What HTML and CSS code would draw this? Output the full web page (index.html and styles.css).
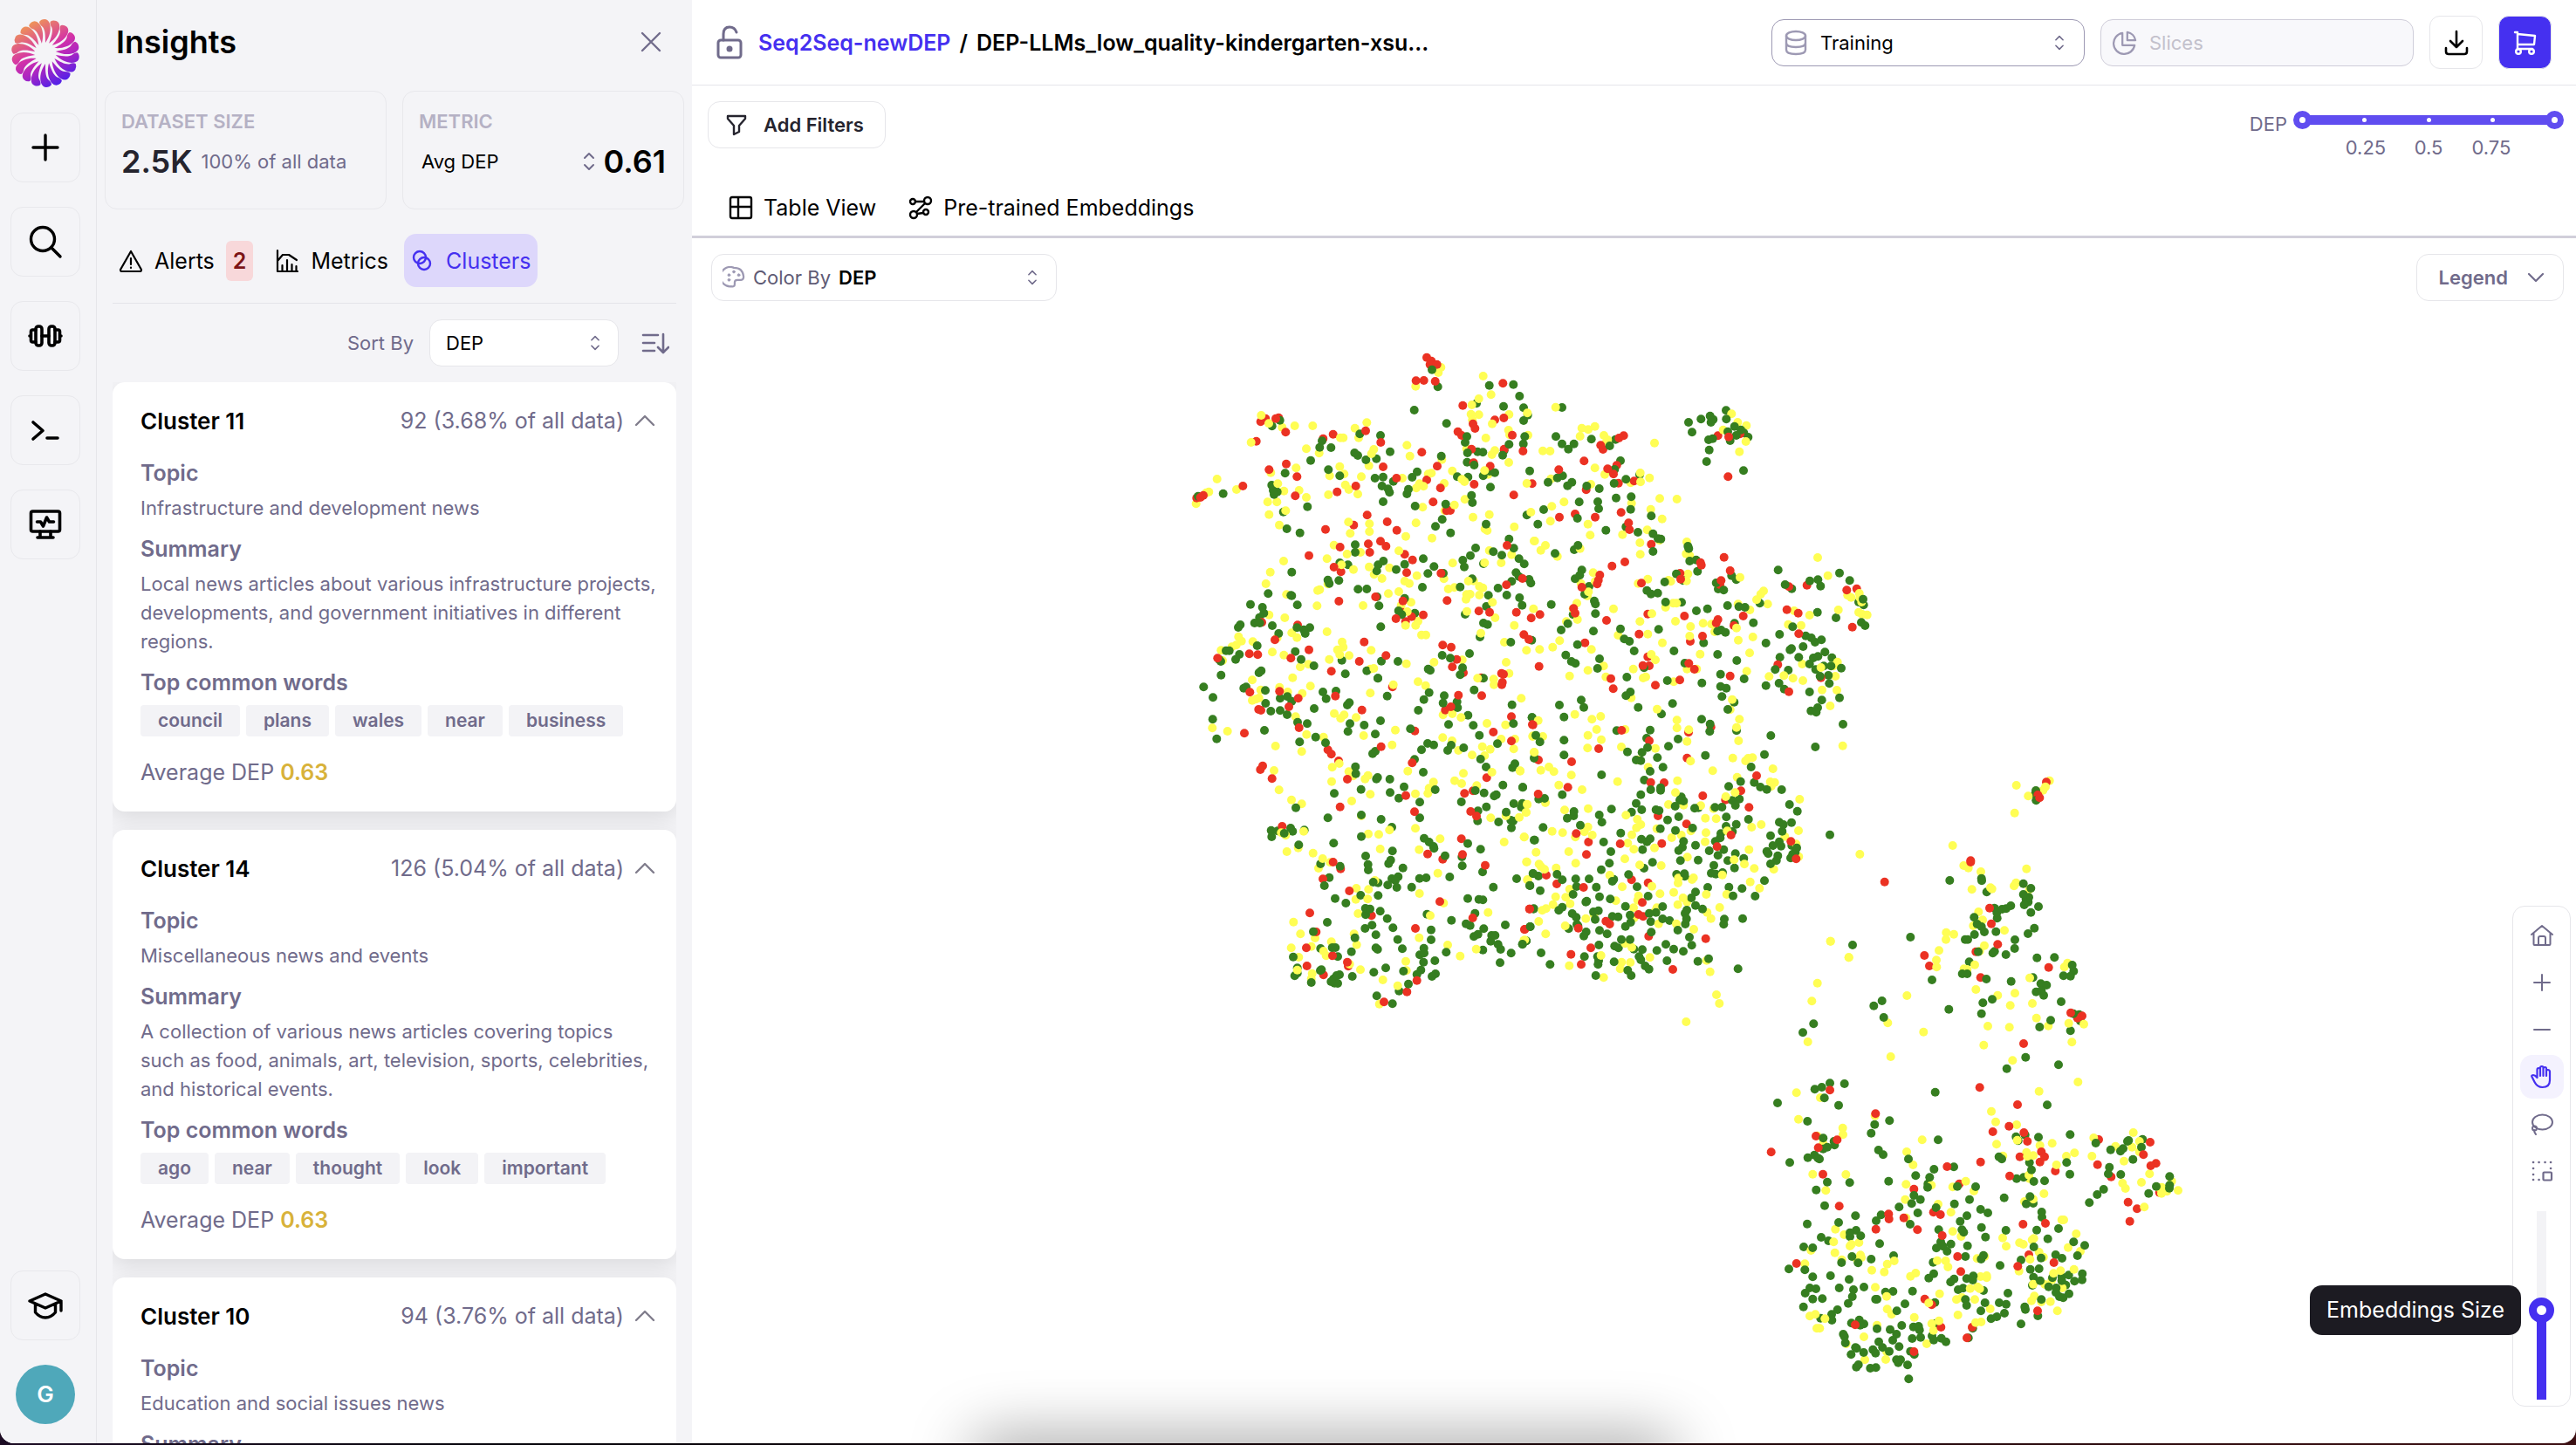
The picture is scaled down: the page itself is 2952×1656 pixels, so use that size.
FILE: index.html
```html
<!DOCTYPE html>
<html lang="en">
<head>
<meta charset="utf-8">
<title>Insights</title>
<link rel="stylesheet" href="styles.css">
</head>
<body>
<div class="app">
  <nav class="rail" aria-label="Main">
    <a class="logo" href="#" aria-label="Home">
      <svg viewBox="-40 -40 80 80" width="80" height="80">
        <defs>
          <linearGradient id="brand" x1="0.25" y1="0.02" x2="0.75" y2="0.98">
            <stop offset="0" stop-color="#f2a04e"/><stop offset="0.45" stop-color="#d433a6"/><stop offset="0.65" stop-color="#b026c0"/><stop offset="1" stop-color="#3f1ff0"/>
          </linearGradient>
          <path id="petal" d="M0-12C0-20 0-26-3-30Q-7-33-7-36-5-39-1-39 3-39 5-34C7-27 5-19 0-12Z" fill="#fff"/>
          <mask id="petals" maskUnits="userSpaceOnUse" x="-40" y="-40" width="80" height="80">
            <use href="#petal"/><use href="#petal" transform="rotate(20)"/><use href="#petal" transform="rotate(40)"/><use href="#petal" transform="rotate(60)"/><use href="#petal" transform="rotate(80)"/><use href="#petal" transform="rotate(100)"/><use href="#petal" transform="rotate(120)"/><use href="#petal" transform="rotate(140)"/><use href="#petal" transform="rotate(160)"/><use href="#petal" transform="rotate(180)"/><use href="#petal" transform="rotate(200)"/><use href="#petal" transform="rotate(220)"/><use href="#petal" transform="rotate(240)"/><use href="#petal" transform="rotate(260)"/><use href="#petal" transform="rotate(280)"/><use href="#petal" transform="rotate(300)"/><use href="#petal" transform="rotate(320)"/><use href="#petal" transform="rotate(340)"/>
          </mask>
        </defs>
        <rect x="-40" y="-40" width="80" height="80" fill="url(#brand)" mask="url(#petals)"/>
      </svg>
    </a>
    <button class="rail-btn" aria-label="New"><svg class="ic" viewBox="0 0 40 40" width="40" height="40"><path d="M20 6v28M6 20h28" stroke-width="3.4"/></svg></button>
    <button class="rail-btn" aria-label="Search"><svg class="ic" viewBox="0 0 40 40" width="40" height="40"><circle cx="17" cy="17" r="13.5" stroke-width="3.4"/><path d="M27 27l10 10" stroke-width="3.4"/></svg></button>
    <button class="rail-btn" aria-label="Train"><svg class="ic" viewBox="0 0 40 40" width="40" height="40"><g stroke-width="3.6"><rect x="9" y="9" width="7" height="22" rx="3"/><rect x="24" y="9" width="7" height="22" rx="3"/><path d="M9 13H5.500q-2 0-2 2v10q0 2 2 2H9M31 13h3.500q2 0 2 2v10q0 2-2 2H31M16 20h8M2 20h1.500M36.500 20H38"/></g></svg></button>
    <button class="rail-btn" aria-label="Console"><svg class="ic" viewBox="0 0 40 40" width="40" height="40"><path d="M6 11l11 9.500L6 30M22 29h12" stroke-width="3.600"/></svg></button>
    <button class="rail-btn" aria-label="Monitor"><svg class="ic" viewBox="0 0 40 40" width="40" height="40"><g stroke-width="3.600"><rect x="3.500" y="5" width="33" height="23" rx="2"/><path d="M10.500 17h4l3 5 4-10 3 5h5M14 28v6M26 28v6M11 35h18"/></g></svg></button>
    <button class="rail-btn rail-push" aria-label="Learn"><svg class="ic" viewBox="0 0 40 40" width="40" height="40"><path d="M2 15l18-8 18 8-18 8zM8.500 18v10q5 6 11.500 6t11.500-6V18M38 15v11" stroke-width="3.400"/></svg></button>
    <button class="avatar" aria-label="Account">G</button>
  </nav>

  <aside class="insights">
    <header class="ins-head">
      <h1>Insights</h1>
      <button class="bare muted" aria-label="Close"><svg class="ic" viewBox="0 0 24 24" width="24" height="24"><path d="M2 2l20 20M22 2L2 22" stroke-width="2.400"/></svg></button>
    </header>
    <div class="stats">
      <section class="stat">
        <h2>DATASET SIZE</h2>
        <p class="stat-row"><strong class="ink">2.5K</strong><span>100% of all data</span></p>
      </section>
      <section class="stat">
        <h2><label for="metric">METRIC</label></h2>
        <div class="stat-row metric">
          <select id="metric"><option>Avg DEP</option></select>
          <svg class="ic muted" viewBox="0 0 14 22" width="14" height="22"><path d="M2 7l5-5 5 5M2 15l5 5 5-5" stroke-width="2"/></svg>
          <strong>0.61</strong>
        </div>
      </section>
    </div>
    <div class="ins-body">
      <div class="tabs">
        <button class="tab"><svg class="ic" viewBox="0 0 28 28" width="28" height="28"><path d="M14 3L2 24q0 2 1.500 2h21q1.500 0 1.500-2zM14 11v7M14 21.500v.5" stroke-width="2.200"/></svg>Alerts<b class="badge">2</b></button>
        <button class="tab"><svg class="ic" viewBox="0 0 28 28" width="28" height="28"><path d="M3 2v24h23M3 14l6-7h7l9 6M8.500 19v7M14 13v13M19.500 18v8M24.500 20v6" stroke-width="2.200"/></svg>Metrics</button>
        <button class="tab active"><svg class="ic" viewBox="0 0 28 28" width="28" height="28"><g stroke-width="2.400"><circle cx="11" cy="10" r="7"/><circle cx="16" cy="17" r="7"/></g></svg>Clusters</button>
      </div>
      <div class="sort">
        <label for="sort">Sort By</label>
        <span class="field sort-field"><select id="sort"><option>DEP</option></select><svg class="ic muted" viewBox="0 0 14 22" width="12" height="18"><path d="M2 7l5-5 5 5M2 15l5 5 5-5" stroke-width="2"/></svg></span>
        <button class="bare muted" aria-label="Sort direction"><svg class="ic" viewBox="0 0 32 26" width="32" height="26"><path d="M2 4h17M2 13h13M2 22h13M25 3v20M19 18l6 6 6-6" stroke-width="2.600"/></svg></button>
      </div>
      <div class="list">
        <article class="card">
          <header><h2>Cluster 11</h2><span>92 (3.68% of all data)</span><svg class="ic" viewBox="0 0 24 14" width="24" height="14"><path d="M2 12L12 2l10 10" stroke-width="2.400"/></svg></header>
          <h3>Topic</h3><p>Infrastructure and development news</p>
          <h3>Summary</h3><p>Local news articles about various infrastructure projects, developments, and government initiatives in different<br>regions.</p>
          <h3>Top common words</h3>
          <ul><li>council</li><li>plans</li><li>wales</li><li>near</li><li>business</li></ul>
          <div class="avg">Average DEP <b>0.63</b></div>
        </article>
        <article class="card">
          <header><h2>Cluster 14</h2><span>126 (5.04% of all data)</span><svg class="ic" viewBox="0 0 24 14" width="24" height="14"><path d="M2 12L12 2l10 10" stroke-width="2.400"/></svg></header>
          <h3>Topic</h3><p>Miscellaneous news and events</p>
          <h3>Summary</h3><p>A collection of various news articles covering topics<br>such as food, animals, art, television, sports, celebrities, and historical events.</p>
          <h3>Top common words</h3>
          <ul><li>ago</li><li>near</li><li>thought</li><li>look</li><li>important</li></ul>
          <div class="avg">Average DEP <b>0.63</b></div>
        </article>
        <article class="card">
          <header><h2>Cluster 10</h2><span>94 (3.76% of all data)</span><svg class="ic" viewBox="0 0 24 14" width="24" height="14"><path d="M2 12L12 2l10 10" stroke-width="2.400"/></svg></header>
          <h3>Topic</h3><p>Education and social issues news</p>
          <h3>Summary</h3>
        </article>
      </div>
    </div>
  </aside>

  <main class="main">
    <header class="top">
      <svg class="ic muted" viewBox="0 0 30 40" width="30" height="40"><g stroke-width="3"><rect x="2" y="17" width="26" height="20" rx="3"/><path d="M8 17V10q0-8 7-8 6 0 8 6"/><circle cx="15" cy="27" r="2" fill="currentColor"/></g></svg>
      <div class="crumbs"><a href="#">Seq2Seq-newDEP</a><span>/</span>DEP-LLMs_low_quality-kindergarten-xsu...</div>
      <label class="field top-field dark">
        <svg class="ic" viewBox="0 0 28 30" width="28" height="30"><g stroke-width="2.400"><ellipse cx="14" cy="7" rx="11" ry="5"/><path d="M3 7v16q0 5 11 5t11-5V7M3 15q0 5 11 5t11-5"/></g></svg>
        <select aria-label="Split"><option>Training</option></select>
        <svg class="ic muted" viewBox="0 0 14 22" width="12" height="18"><path d="M2 7l5-5 5 5M2 15l5 5 5-5" stroke-width="2"/></svg>
      </label>
      <label class="field top-field off">
        <svg class="ic" viewBox="0 0 30 30" width="28" height="28"><g stroke-width="2.400"><path d="M12 3v15h15A13 13 0 1 1 12 3z"/><path d="M18 2v10h10A12 12 0 0 0 18 2z"/></g></svg>
        <select aria-label="Slices" disabled><option>Slices</option></select>
      </label>
      <button class="sq" aria-label="Download"><svg class="ic" viewBox="0 0 28 30" width="28" height="30"><path d="M14 2v18M7 13l7 7 7-7M2 21v4q0 3 3 3h18q3 0 3-3v-4" stroke-width="2.600"/></svg></button>
      <button class="sq cart" aria-label="Cart"><svg class="ic" viewBox="0 0 28 30" width="28" height="30"><g stroke-width="2.400"><path d="M2 3h3v19M5 5l20 2-1 10H5M5 22h17"/><circle cx="6" cy="25" r="2.800"/><circle cx="21" cy="25" r="2.800"/></g></svg></button>
    </header>
    <div class="filters">
      <button class="pill strong"><svg class="ic" viewBox="0 0 24 26" width="24" height="26"><path d="M2 3h20v3l-7 8v7l-6 3V14L2 6z" stroke-width="2.400"/></svg>Add Filters</button>
      <div class="range">
        <span class="range-name">DEP</span>
        <div class="range-body">
          <div class="range-track"><i></i><i></i><i></i>
            <input type="range" aria-label="Minimum DEP" min="0" max="1" step="0.01" value="0">
            <input type="range" aria-label="Maximum DEP" min="0" max="1" step="0.01" value="1">
          </div>
          <div class="range-marks"><span>0.25</span><span>0.5</span><span>0.75</span></div>
        </div>
      </div>
    </div>
    <div class="views">
      <button class="view"><svg class="ic" viewBox="0 0 28 28" width="28" height="28"><path d="M4 2h20q2 0 2 2v20q0 2-2 2H4q-2 0-2-2V4q0-2 2-2zM2 13h24M11 2v24" stroke-width="2.400"/></svg>Table View</button>
      <button class="view"><svg class="ic" viewBox="0 0 28 28" width="28" height="28"><g stroke-width="2.400"><circle cx="5" cy="7" r="3"/><circle cx="22" cy="6" r="4"/><circle cx="6" cy="22" r="4"/><circle cx="20" cy="19" r="3"/><path d="M8 7h10M19 9L9 19M10 21l7-1"/></g></svg>Pre-trained Embeddings</button>
    </div>
    <section class="plot">
      <svg class="dots" id="dots" viewBox="0 0 2159 1381" role="img" aria-label="Embeddings scatter plot"></svg>
      <div class="glow"></div>
      <div class="plot-bar">
        <div class="field color-field">
          <svg class="ic" viewBox="0 0 28 28" width="26" height="26"><g stroke-width="2.400"><path d="M14 2a12 12 0 1 0-3 23q4 1 4-3v-2q0-3 3-3h5q3 0 3-4Q25 2 14 2z"/><g fill="currentColor" stroke-width="1"><circle cx="14" cy="7" r="1.500"/><circle cx="8" cy="11" r="1.500"/><circle cx="20" cy="11" r="1.500"/><circle cx="8" cy="17" r="1.500"/></g></g></svg>
          <label for="color">Color By</label>
          <select id="color"><option>DEP</option></select>
          <svg class="ic muted" viewBox="0 0 14 22" width="12" height="18"><path d="M2 7l5-5 5 5M2 15l5 5 5-5" stroke-width="2"/></svg>
        </div>
        <button class="pill legend">Legend<svg class="ic" viewBox="0 0 20 12" width="20" height="12"><path d="M2 2l8 8 8-8" stroke-width="2.200"/></svg></button>
      </div>
      <div class="tools">
        <button aria-label="Reset view"><svg class="ic" viewBox="0 0 28 28" width="28" height="28"><path d="M2 13L14 3l12 10M4.500 11v13q0 1 1 1h17q1 0 1-1V11M10 25v-8q0-2 2-2h4q2 0 2 2v8" stroke-width="2"/></svg></button>
        <button aria-label="Zoom in"><svg class="ic" viewBox="0 0 28 28" width="28" height="28"><path d="M14 5v18M5 14h18" stroke-width="2"/></svg></button>
        <button aria-label="Zoom out"><svg class="ic" viewBox="0 0 28 28" width="28" height="28"><path d="M5 14h18" stroke-width="2"/></svg></button>
        <button class="on" aria-label="Pan"><svg class="ic" viewBox="0 0 28 28" width="28" height="28"><path d="M8.500 15V6q0-2 1.700-2T12 6v7V4q0-2 1.800-2t1.700 2v9V5q0-2 1.800-2T19 5v8V8q0-2 1.800-2t2.200 2v10q0 8-8.500 8-6 0-9-6L3 15q-2-3 1-3 2 0 4.500 3" stroke-width="2.200"/></svg></button>
        <button aria-label="Lasso"><svg class="ic" viewBox="0 0 28 28" width="28" height="28"><g stroke-width="2"><ellipse cx="14.500" cy="12" rx="11.500" ry="8.500"/><circle cx="5.500" cy="19" r="2.500"/><path d="M5 21q0 3 2 5"/></g></svg></button>
        <button aria-label="Box select"><svg class="ic" viewBox="0 0 28 28" width="28" height="28"><rect x="15.500" y="15.500" width="9.500" height="9" rx="1" stroke-width="2.200"/><path d="M4 4h.1M10.500 4h.1M17.500 4h.1M24 4h.1M4 11h.1M24 11h.1M4 18h.1M4 24h.1M10.500 24h.1" stroke-width="2.600"/></svg></button>
        <div class="size">
          <input id="size" type="range" min="0" max="100" value="47" aria-labelledby="size-tip">
          <div class="tip" id="size-tip" role="tooltip">Embeddings Size</div>
        </div>
      </div>
    </section>
  </main>
</div>
<script src="points.js"></script>
</body>
</html>
```
FILE: styles.css
```css
*{box-sizing:border-box;margin:0;padding:0}
body{font:22px/30px Inter,"Liberation Sans",sans-serif;color:#000;background:linear-gradient(90deg,#1c0c24,#05040a 20%,#1a0508 60%,#3c0f12)}
button,select,input{font:inherit;color:inherit;background:none;border:0}
button{display:flex;align-items:center;justify-content:center}
select{appearance:none;flex:1;min-width:0;opacity:1}
a{color:#4530f0;text-decoration:none}
ul{list-style:none}
.ic{fill:none;stroke:currentColor;stroke-linecap:round;stroke-linejoin:round;flex:none;display:block}
.muted{color:#706b8b}
.app{display:grid;grid-template-columns:111px 682px minmax(0,1fr);height:calc(100vh - 2px);overflow:hidden;border-radius:0 0 16px 16px;background:#fff}

.rail{display:flex;flex-direction:column;align-items:center;gap:28px;padding:21px 6px 22px 0;background:#f4f4f7;border-right:1px solid #e6e6ea}
.logo{height:80px}
.rail-btn{width:80px;height:80px;border:1px solid #e8e8ec;border-radius:14px}
.rail-push{margin-top:auto}
.avatar{width:68px;height:68px;border-radius:50%;background:#4fa8ba;color:#fff;font-size:26px;font-weight:600}

.insights{display:flex;flex-direction:column;min-height:0;background:#f4f4f7}
.ins-head{display:flex;align-items:center;justify-content:space-between;flex:none;height:104px;padding:0 35px 8px 22px}
.ins-head h1{font-size:36px;line-height:44px;font-weight:600}
.stats{display:grid;grid-template-columns:1fr 1fr;gap:18px;margin:0 9px 28px}
.stat{height:136px;padding:19px 20px 19px 18px;border:1px solid #e8e8ec;border-radius:14px}
.stat h2{font-size:22px;font-weight:600;color:#b5b1c4}
.stat-row{display:flex;align-items:center;gap:10px;margin-top:9px;line-height:44px;color:#706b8b}
.stat-row strong{font-size:36px;font-weight:600;color:#000}
.stat-row .ink{color:#25242e}
.metric{padding-left:3px}
.metric select{color:#000}
.ins-body{display:flex;flex-direction:column;flex:1;min-height:0;margin:0 18px}
.tabs{display:flex;gap:10px;padding-bottom:18px;border-bottom:1px solid #e4e4e9}
.tab{gap:13px;height:61px;padding:0 8px 0 7px;border-radius:14px;font-size:25px}
.tab.active{background:#ddd7fb;color:#4530f0}
.badge{padding:8px;border-radius:6px;background:#f8d8da;color:#7c1416;font-size:25px;font-weight:600}
.sort{display:flex;align-items:center;justify-content:flex-end;gap:18px;margin:18px 0;color:#706b8b}
.sort>button{margin:0 8px}
.field{display:flex;align-items:center;gap:14px;height:54px;padding:0 20px 0 18px;border:1px solid #e6e6ea;border-radius:14px;background:#fff;color:#9d99b3}
.field select{color:#000}
.sort-field{width:217px}
.list{flex:1;min-height:0;overflow:hidden;display:flex;flex-direction:column;gap:21px}
.card{flex:none;padding:27px 24px 28px 32px;border-radius:14px;background:#fff;box-shadow:0 8px 24px rgba(0,0,0,.1);color:#706b8b;line-height:33px}
.card header{display:flex;align-items:center;gap:12px;height:34px;margin-bottom:26px;font-size:25px}
.card header h2{margin-right:auto;font-size:26px;font-weight:600;color:#000}
.card header svg{color:#807d8c}
.card h3{margin:13px 0 7px;font-size:25px;line-height:34px;font-weight:600}
.card header+h3{margin-top:0}
.card p{margin-right:-16px}
.card ul{display:flex;gap:7px;margin-top:9px}
.card li{padding:0 20px;border-radius:4px;background:#f3f3f6;font-size:21px;line-height:36px;font-weight:600}
.avg{margin-top:24px;font-size:25px;line-height:34px}
.avg b{font-weight:600;color:#d8b23a}

.main{display:flex;flex-direction:column;min-width:0}
.top{display:flex;align-items:center;flex:none;gap:18px;height:98px;padding:0 28px;border-bottom:1px solid #e6e6ea}
.crumbs{flex:1;min-width:0;overflow:hidden;white-space:nowrap;font-size:25px;font-weight:600}
.crumbs span{margin:0 10px}
.top-field{width:359px;padding:0 22px 0 13px}
.dark{border-color:#9d99b3}
.off{background:#f8f8fb;border-color:#cfcdd9}
.off select{color:#c3c1cc}
.sq{width:61px;height:61px;border:1px solid #e6e6ea;border-radius:12px}
.cart{background:#4530f0;color:#fff}
.filters{display:flex;justify-content:space-between;align-items:flex-start;padding:18px 14px 0 18px}
.pill{gap:19px;height:54px;padding:0 24px 0 20px;border:1px solid #e6e6ea;border-radius:14px;background:#fff;font-weight:600}
.strong{color:#25242e}
.range{display:flex;gap:7px;color:#706b8b}
.range-name{padding-top:11px}
.range-body{width:310px;padding-top:10px}
.range-track{position:relative;display:flex;justify-content:space-evenly;align-items:center;height:22px;padding:0 10px;background:linear-gradient(#604df0,#604df0) center/290px 11px no-repeat}
.range-track i{width:5px;height:5px;border-radius:50%;background:#fff}
.range-track input{position:absolute;left:0;top:0;width:100%;height:22px;appearance:none;pointer-events:none}
.range-track input::-webkit-slider-thumb{appearance:none;width:21px;height:21px;border-radius:50%;border:7px solid #604df0;background:#fff;pointer-events:auto}
.range-marks{display:grid;grid-template-columns:repeat(3,72px);justify-content:center;margin-top:6px;text-align:center}
.views{display:flex;gap:37px;padding:37px 42px 15px;border-bottom:3px solid #d1cfda}
.view{gap:12px;height:34px;font-size:25px}
.plot{position:relative;flex:1;min-height:0;overflow:hidden}
.dots{position:absolute;inset:0;width:100%;height:100%}
.plot-bar{position:relative;display:flex;justify-content:space-between;padding:18px 14px 0 22px}
.color-field{width:396px;gap:9px;padding:0 21px 0 12px}
.color-field label{color:#5f5b75}
.color-field select{font-weight:600}
.legend{gap:22px;padding:0 21px 0 25px;color:#706b8b}
.glow{position:absolute;left:15%;right:48%;bottom:-40px;height:40px;border-radius:20px;box-shadow:0 0 70px 6px rgba(0,0,0,.4)}
.tools{position:absolute;right:6px;bottom:42px;display:flex;flex-direction:column;align-items:center;gap:4px;width:67px;padding:8px 0 7px;border:1px solid #e6e6ea;border-radius:14px;background:#fff;color:#706b8b}
.tools button{width:50px;height:50px;border-radius:14px}
.tools .on{background:#f4f2fe;color:#4530f0}
.size{position:relative;width:29px;height:216px;margin-top:17px}
.size input{display:block;width:29px;height:216px;appearance:none;writing-mode:vertical-lr;direction:rtl;background:linear-gradient(#f3f3f6 50%,#4530f0 50%) center/11px 100% no-repeat}
.size input::-webkit-slider-thumb{appearance:none;width:29px;height:29px;border-radius:50%;border:9px solid #4530f0;background:#fff}
.tip{position:absolute;right:38px;top:85px;padding:0 19px;border-radius:14px;background:#1c1b22;color:#fff;font-size:25px;line-height:57px;white-space:nowrap}
```
FILE: points.js
```js
// Embedding points, grouped in tiles. x,y count thirds of a unit from the tile's origin.
const COLORS = { y: "#fffe54", g: "#367e20", r: "#eb3223" };
const TILES = [
{ at: [547, 107],
r: "885,89 901,101 896,113 920,113 848,169 875,168 914,171 314,310 331,299 366,299 376,296 400,346 299,377 343,475 402,455 439,499 253,531 94,572 107,570 117,563 433,565 563,353 529,368 675,341 727,381 735,465 781,504 641,531 577,551 868,415 921,463 885,510 932,538 907,586 953,616 966,615 680,631 749,654 634,665 537,680 782,683 726,721 745,738 684,730 689,759 587,741 480,770 566,810 590,826 809,766 836,785 816,829 934,831 583,927 709,912 803,926 779,987 812,997 833,980 873,974 800,965 955,925 1064,961 1101,965 1193,965 1244,985 1219,1042 1236,1058 940,1078 969,1085 988,1127 973,1153 1011,1173 1072,1190 1142,1175 1149,1178 441,1009 363,1060 480,1094 418,1123 275,1108 304,1111 166,1123 557,1168 653,1134 670,1067 745,1114 318,1000 1009,254 1147,178 1119,304 1150,297 1044,317 1051,333 992,344 1005,357 1179,356 1216,411 1039,404 1151,404 1046,451 1103,463 1048,525 1247,523 1184,562 1161,735 1159,871 1214,849",
y: "934,123 925,141 847,188 316,288 342,316 388,329 431,324 493,324 281,381 471,403 436,469 349,485 164,507 136,551 127,554 231,543 92,592 373,523 394,548 446,546 471,570 338,586 370,586 343,629 400,616 378,665 393,789 347,827 332,867 638,332 679,313 598,365 588,365 651,365 703,405 695,420 686,461 586,464 551,496 515,418 601,490 660,499 605,527 617,543 547,561 648,559 817,391 827,428 801,504 937,440 901,487 890,490 860,523 874,532 849,538 945,522 973,479 871,604 980,596 947,616 848,658 616,655 688,661 688,688 622,694 813,704 903,710 566,734 542,781 611,765 657,759 633,818 687,809 757,812 704,835 731,849 789,754 851,839 809,858 825,866 545,868 517,887 510,890 508,943 403,904 397,984 343,974 666,942 753,901 789,894 831,931 797,941 818,963 812,1010 855,996 847,1010 867,1043 882,1043 542,1032 594,1067 598,1085 578,1094 586,1111 618,1114 694,1096 550,1127 421,1036 439,1052 371,1052 354,1102 394,1112 478,1144 450,1153 424,1190 287,1066 248,1064 238,1049 230,1078 215,1084 178,1096 183,1131 285,1198 703,1158 691,1160 815,1142 910,1137 1007,1129 1060,1192 1115,1195 1079,153 1106,217 1064,231 1040,252 1037,284 1064,286 1042,304 1168,285 1110,317 1166,339 1170,355 1088,366 1233,356 1231,280 1022,403 1119,409 1109,423 1167,450 1084,478 1096,491 1006,508 1015,516 1229,522 1016,577 1044,638 1100,629 1243,621 1085,679 1093,684 1186,671 1100,753 1084,795 1141,795 1177,767 974,796 944,850 1028,858 1046,857 1066,876 1078,881 980,880 959,885 1034,903 1022,904 1020,920 1066,906 1111,931 1023,962 1120,984 1186,1010 1071,1037 1152,1068 1228,1096 1158,1137 1168,1175 1252,953 1254,720 592,802",
g: "903,131 923,190 842,270 353,325 380,305 525,376 517,398 556,399 486,443 547,475 586,496 398,487 185,557 99,566 352,528 357,546 371,551 360,560 475,602 392,620 404,678 449,692 421,827 340,901 421,908 418,907 440,940 279,938 320,948 325,968 310,983 293,1002 311,1002 244,1008 237,1017 354,1011 376,1038 302,1080 195,1097 206,1097 241,1110 228,1127 171,1127 177,1134 178,1181 316,1166 308,1173 439,1018 462,1025 467,1038 483,1018 433,1100 453,1127 497,1149 593,1130 605,1177 679,1166 729,1133 786,1134 717,1192 655,352 726,357 759,413 637,417 648,426 676,441 712,437 707,504 735,500 731,531 752,541 757,553 770,515 735,585 835,501 852,482 822,542 817,558 935,428 953,316 845,600 950,593 938,646 915,670 967,692 639,733 639,759 586,795 614,802 736,789 718,802 713,823 583,856 545,854 550,866 649,886 679,885 714,912 721,943 780,818 809,800 873,781 910,808 889,832 870,879 942,831 809,917 788,960 799,973 844,968 727,1015 938,1113 966,1123 1032,1107 1008,1156 1000,1180 890,1160 897,1165 1100,185 1183,182 1204,222 1056,247 1149,257 1218,262 1218,306 1232,287 1023,361 1017,381 1168,388 1151,409 1146,425 1222,361 1217,386 1060,413 1078,415 1025,417 1024,449 1048,459 1101,480 1119,485 1079,496 1027,500 990,499 1104,535 1239,479 1039,563 1042,588 1229,631 1089,662 1168,713 1184,745 1053,744 1035,770 1009,786 1014,809 1114,757 1143,769 1202,781 1220,799 1080,798 1041,850 1000,878 1192,829 1202,842 1177,859 1237,852 1243,865 1130,882 1097,907 1160,906 1204,915 1213,941 1090,945 1017,972 1080,1002 1094,1007 1068,1050 1174,1068 1246,1061 1080,1192" },
{ at: [947, 107],
r: "362,358 346,366 283,391 291,405 226,445 139,475 338,460 307,472 327,490 344,521 233,544 398,514 141,638 195,627 264,638 353,622 379,658 382,681 457,731 366,792 322,806 280,837 275,855 271,868 218,879 423,865 190,952 195,968 303,993 445,971 571,978 415,1040 229,1070 71,1151 445,1118 428,1148 450,1149 318,1193 326,1228 471,1216 555,1198 591,1065 633,1047 586,1141 605,1161 556,831 558,851 626,794 629,803 707,776 728,822 697,856 693,870 686,990 680,1002 773,978 741,1011 728,1184 686,358 723,362 762,352 721,499 930,877 992,872 1129,889 1163,884 923,956 962,968 1148,1016 964,1039 892,1145 930,1238 1040,1190 74,973",
y: "128,260 218,332 240,337 263,326 212,360 294,357 307,372 301,383 84,410 109,411 468,383 263,469 297,491 419,486 451,503 420,517 386,520 249,525 112,506 115,601 157,586 389,590 486,574 545,576 455,611 494,644 443,682 358,698 110,652 239,662 247,700 56,720 93,735 77,752 418,726 419,766 485,718 212,746 134,773 257,829 264,859 215,866 241,895 237,909 201,934 188,953 203,990 165,997 327,953 418,997 459,970 445,851 412,866 516,855 524,859 583,833 578,857 544,934 532,934 506,948 540,996 579,723 577,764 589,770 635,1003 664,1006 592,1014 589,1047 762,845 755,937 796,957 843,892 833,903 819,922 857,937 806,1050 756,1061 750,1019 675,1032 625,1109 495,1070 445,1040 343,1044 251,1093 142,1063 118,1085 73,1093 176,1184 239,1165 293,1150 301,1187 457,1110 471,1129 395,1160 438,1187 429,1191 534,1204 580,1160 613,1160 388,1259 477,1298 785,1168 795,1105 735,1265 728,1300 194,1316 733,283 754,312 784,323 704,338 782,378 760,413 1029,777 1064,839 1132,907 1144,914 1172,900 1174,915 1180,930 1170,965 1182,972 1199,974 1100,957 1001,975 948,960 928,1007 972,1010 976,1143 913,1183 862,1186 944,1192 978,1200 1097,1136 1083,1150 1040,1155 1090,1185 1044,1232 1095,1233 1072,1287",
g: "150,261 129,361 150,386 172,404 191,386 251,370 334,371 314,393 351,444 311,476 331,474 329,522 370,508 417,492 102,518 134,503 152,496 184,518 169,530 235,531 278,540 336,572 388,568 209,586 273,585 276,609 386,611 203,642 87,612 67,662 370,671 301,683 411,690 463,695 480,712 490,713 457,634 463,756 205,735 192,750 126,763 218,820 211,838 195,850 243,876 228,903 261,926 265,937 265,970 188,973 170,1004 147,1026 113,938 258,1030 351,1022 364,1057 382,1065 398,1098 482,1024 442,890 456,902 479,899 503,861 506,930 561,931 543,833 566,856 583,738 586,746 589,789 611,785 616,824 650,953 612,960 680,864 687,885 706,889 733,839 749,853 719,942 758,946 779,948 830,934 808,1001 743,1003 685,1030 697,1026 712,1034 637,1070 685,1110 751,1131 535,1098 572,1140 512,1200 631,1208 695,1178 695,1220 715,1226 700,1255 742,1274 720,1299 776,1194 851,1071 203,1076 163,1112 182,1134 196,1141 279,1125 272,1158 373,1188 432,1156 370,1252 385,1239 412,1292 530,1279 492,1315 216,1267 225,1292 141,1284 585,312 597,346 628,301 659,290 670,302 662,312 714,271 715,301 743,326 765,338 775,348 790,363 720,344 728,375 749,357 654,372 668,368 656,407 647,447 774,478 893,820 1104,830 1139,856 1030,853 1002,857 1039,875 917,870 940,884 1028,965 1092,984 1185,920 1170,930 1187,940 1179,1000 1192,1011 943,1015 898,1041 988,1046 1007,1053 1020,1068 1042,1060 979,1083 939,1090 934,1094 899,1120 964,1120 1054,1102 1030,1117 1014,1122 1001,1143 1078,1121 1075,1150 1050,1150 1022,1162 1066,1182 1037,1185 1110,1157 1069,1210 928,1164 883,1162 851,1217 896,1209 914,1229 1001,1239 1043,1267 1104,1259 1029,1293 1006,1304 1024,1309" },
{ at: [547, 487],
r: "379,97 277,100 443,121 411,150 307,159 315,162 446,222 571,113 662,161 767,82 844,233 728,287 258,241 545,298 557,313 582,336 321,353 313,366 353,397 612,399 587,494 813,455 835,343 994,110 1074,112 949,161 968,150 1114,237 1176,184 1176,268 1248,211 1145,66 1091,394 1015,448 1044,439 1036,510 1056,526 843,511 1004,604 888,656 940,674 1008,658 1086,695 388,561 563,684 589,707 528,742 619,783 695,868 483,859 505,924 471,979 561,1006 473,1041 530,1072 612,1028 615,1042 930,820 846,912 1043,876 1239,845 1222,915 851,1091 817,1130 738,1165 1143,74",
y: "379,83 407,99 457,104 485,79 691,103 314,92 308,120 285,128 298,124 434,184 472,245 530,254 567,173 601,178 589,190 642,187 668,249 777,230 766,281 770,74 855,64 881,77 148,223 200,234 365,285 455,304 560,358 584,345 558,407 617,373 632,388 683,386 673,398 691,451 627,474 820,371 846,449 908,409 893,430 889,448 941,178 973,174 1003,187 1092,207 1156,212 1210,121 1116,74 1141,261 1188,261 1184,295 940,256 972,267 1076,287 1103,296 1084,318 1041,316 994,300 1109,375 1206,371 981,404 1005,414 1011,379 1057,421 1105,532 1203,530 1226,513 1212,484 1230,487 1157,525 846,568 931,604 859,641 1151,615 1220,598 1229,683 1231,745 923,722 360,369 377,436 420,470 455,484 660,525 684,587 720,589 757,574 725,639 385,583 400,592 462,578 443,635 404,648 494,653 527,672 513,705 553,685 707,747 643,774 685,778 641,812 682,811 649,861 860,792 943,825 897,868 859,944 957,969 1000,1007 1055,983 1096,857 427,890 451,931 419,979 501,945 488,974 445,1011 557,958 530,990 539,1006 635,931 644,968 620,1035 657,1054 440,1055 491,1067 488,1085 813,1025 815,1057 734,1089 785,1109 722,1172 1219,953 1250,250 1254,306",
g: "118,82 150,118 149,193 163,260 264,82 256,86 330,94 331,138 349,165 381,163 405,177 381,121 406,115 421,131 498,156 528,99 539,122 573,96 619,136 612,144 749,113 717,52 621,208 614,235 670,213 708,244 726,198 708,303 699,311 441,203 474,208 503,254 448,271 537,274 327,231 640,356 641,380 659,434 567,448 716,393 712,398 758,399 807,425 759,445 789,464 861,478 861,532 873,375 843,331 829,226 867,298 888,276 909,281 856,162 875,125 893,101 945,112 941,137 989,133 991,153 960,211 1027,179 1045,214 1048,92 1066,248 1178,143 1183,208 1128,277 957,300 969,282 1012,291 1070,330 1089,357 1188,346 1180,359 1147,419 1215,427 1124,452 1117,457 1082,446 1052,438 1004,477 1090,494 1061,508 1060,542 914,435 1132,546 1158,512 1174,540 1182,543 1176,566 1184,483 1211,493 1247,187 1254,608 1254,326 545,532 565,619 660,596 728,537 765,564 660,522 435,497 350,575 352,597 372,577 395,585 417,567 424,578 464,574 445,625 520,690 587,698 550,737 533,765 570,809 607,825 543,891 675,663 683,692 684,711 767,646 761,677 754,689 803,704 787,734 765,741 777,747 751,763 782,771 833,770 860,740 883,738 718,755 701,753 658,798 718,799 674,843 690,845 675,865 725,853 697,901 673,912 710,934 749,878 769,910 785,950 801,982 710,979 716,984 638,944 626,992 629,1077 876,602 893,615 908,630 910,637 948,662 964,735 1026,620 1070,640 1006,666 1007,697 1077,718 1114,770 1194,741 1239,764 1026,809 1064,812 1078,814 1051,860 970,884 1020,896 1034,902 1081,913 1061,932 1047,940 1155,900 1108,936 1120,936 1105,956 1130,967 1139,984 1078,986 1175,997 1137,1030 886,863 900,917 900,951 875,980 861,1003 876,997 874,1028 913,1023 952,994 865,1055 851,1070 915,1068 903,1077 805,1059 822,1103 790,1127 713,1144 767,1171 744,1048 703,1063 495,923 520,981 571,978 560,978 579,1009 523,1054 519,1057 426,1010 440,1048 440,1066 431,1075 488,1098 585,1071 575,1074 565,1085 556,1095 568,1100 579,1101 1240,906 1227,955 1214,967 1252,845 1250,723" },
{ at: [947, 527],
r: "50,92 355,111 276,174 183,219 69,213 450,147 585,118 662,100 580,206 170,307 68,330 455,290 501,291 634,336 480,405 578,433 712,350 765,319 819,267 793,376 731,471 683,511 937,493 955,553 199,466 241,495 350,501 234,538 493,500 96,609 132,639 224,651 389,625 446,635 38,725 21,796 413,744 429,751 426,703 301,767 314,777 206,791 448,819 249,859 181,881 216,916 644,827 531,933",
y: "68,77 253,73 283,63 269,108 239,128 285,143 238,172 354,168 367,108 471,173 49,132 84,132 55,187 545,76 545,103 586,109 580,149 592,217 750,101 760,73 757,147 105,237 77,248 122,253 182,265 6,250 139,299 219,315 341,287 409,212 446,238 547,284 668,250 737,206 781,216 790,207 805,205 752,272 875,243 866,288 881,290 869,304 967,348 540,325 516,366 568,368 627,370 713,339 745,325 671,380 643,413 680,415 802,444 835,435 963,456 30,365 27,393 93,360 159,385 240,380 370,403 409,417 421,435 406,446 390,470 476,449 527,480 560,471 593,457 645,463 642,494 718,457 916,476 955,502 964,545 793,521 742,556 777,571 811,586 878,589 940,545 116,458 152,463 196,478 227,460 239,443 254,471 20,478 376,499 397,520 468,515 61,530 173,528 28,563 71,571 78,580 90,589 130,584 197,568 366,553 417,574 491,576 581,547 32,625 314,609 459,647 357,649 550,619 549,636 602,618 597,624 534,668 566,687 580,701 487,673 701,608 797,632 829,654 646,675 716,675 692,720 649,737 662,758 548,710 396,721 413,680 410,695 335,697 176,657 163,685 128,683 178,707 119,710 95,724 82,730 70,768 161,783 232,758 260,745 398,756 476,721 470,733 482,776 543,776 603,795 94,811 367,844 390,857 452,892 284,885 355,908 385,909 350,931 175,920 293,961 647,902 659,941 681,1020 691,1050 577,1113 1115,164 1174,537 1073,836 1136,892 1028,980 1009,1042 995,1182 22,832",
g: "47,67 157,65 60,128 74,151 157,145 157,196 338,112 453,110 441,138 444,170 425,187 375,185 405,213 421,215 478,205 497,238 453,252 549,141 516,166 659,89 658,115 630,73 643,197 750,112 868,129 846,194 800,237 57,207 286,264 433,282 455,315 489,308 489,317 421,332 151,332 15,307 70,347 90,345 14,362 10,375 723,304 764,287 811,290 832,306 854,314 905,315 932,366 959,389 560,340 555,351 568,354 539,372 405,362 424,384 389,392 320,382 278,402 287,427 191,390 190,405 168,413 213,437 352,464 85,445 56,488 293,495 318,528 473,384 484,387 513,419 551,408 488,449 540,455 599,447 606,379 619,377 676,376 700,375 735,352 746,369 760,347 715,409 749,434 714,441 791,417 736,459 696,466 694,481 677,493 867,473 897,427 911,435 939,428 907,458 897,494 875,507 903,509 940,507 957,515 952,530 943,537 936,550 854,527 859,535 892,542 887,559 867,570 423,485 453,484 442,494 427,521 461,565 432,585 568,493 564,513 551,524 557,559 618,557 609,506 656,525 706,521 686,541 672,575 720,559 746,535 775,551 743,584 663,602 679,605 702,600 846,628 814,681 769,655 724,650 738,680 651,651 313,568 285,590 379,607 328,623 323,630 408,649 446,681 544,606 571,604 572,613 609,667 595,687 609,713 633,725 579,729 573,740 578,759 574,777 588,822 596,850 548,798 496,717 473,737 450,740 455,769 496,759 520,765 457,805 384,746 386,771 368,785 368,716 323,751 343,752 316,691 279,683 268,650 243,622 197,622 200,648 188,675 235,698 232,701 51,604 69,612 133,606 151,625 40,645 75,662 53,724 151,719 139,730 185,741 199,754 201,778 205,783 173,793 41,786 258,735 275,731 264,761 279,799 305,811 233,804 225,818 27,835 14,846 78,876 109,916 277,849 227,889 272,889 276,903 274,916 331,853 344,859 354,830 384,830 397,863 426,865 476,868 507,847 534,863 567,871 511,903 415,889 421,900 436,921 449,932 376,936 388,954 266,954 329,907 617,905 654,896 755,931 771,758 708,760 706,778 1116,90 1021,168 1071,470 1149,849 1222,1058 1015,1120 978,1150" },
{ at: [1207, 587],
r: "479,452 1035,109 1006,153 1012,163 775,384 775,379 840,542 846,596 868,667 793,692 616,705 633,741 809,781 1043,746 1119,902 1158,913 1142,920 957,1008 806,1159",
y: "932,120 1046,104 1032,125 1024,137 973,157 926,215 713,327 751,396 767,404 810,417 967,407 931,455 924,466 779,478 843,472 848,476 977,478 802,555 816,583 784,603 891,619 691,626 717,632 690,650 666,688 657,721 658,745 822,671 806,690 789,737 752,751 763,753 793,822 868,842 927,835 911,877 987,870 978,782 1097,745 1108,731 1001,920 1042,947 1112,938 1164,941 1123,1003 834,948 908,952 820,1013 919,1066 1144,1140 1010,1172 556,843 613,968 490,937 500,1053 293,656 356,712",
g: "999,138 1000,172 997,150 703,447 812,440 813,448 830,487 956,458 982,474 956,495 975,505 965,512 973,521 959,531 1008,537 982,557 994,611 972,630 857,542 865,558 883,546 897,544 913,534 866,577 787,574 797,597 812,606 822,624 862,623 788,633 756,650 765,650 927,651 926,681 896,702 857,691 851,697 801,692 770,727 746,768 763,768 829,786 568,642 642,789 700,890 914,794 989,781 1003,713 1063,712 1124,738 1129,759 1094,775 1118,776 1016,802 1036,807 1000,830 1018,826 1026,842 1086,864 817,868 849,856 812,905 1128,905 1148,908 1152,930 1118,964 1050,928 1012,951 964,1055 899,1094 1077,1081 653,1175 470,861 476,918" },
{ at: [1207, 927],
r: "291,148 448,229 316,319 251,346 243,306 89,361 267,437 323,547 936,198 907,272 851,291 958,294 970,324 944,377 1018,360 1029,377 1013,395 909,443 1066,426 809,395 694,411 736,470 580,488 493,574 494,591 449,626 545,587 592,628 647,568 671,576 677,648 730,720 741,772 955,609 1032,606 975,714 937,754 1061,741 1005,907 617,866 641,886 673,963 780,963 762,1000 378,955 580,1047 176,744 1215,318 1392,327 1369,370 1412,400 1394,408 1211,404 1258,446 1316,533 1347,556 1322,599 1424,500",
y: "176,157 258,174 183,248 335,278 336,301 247,305 268,332 232,437 346,438 277,493 608,319 555,360 577,405 553,472 550,524 446,236 846,221 861,257 933,267 864,334 935,320 886,374 967,362 970,376 990,373 1013,338 1055,331 1070,405 1104,375 1132,364 975,440 977,452 1027,504 960,531 990,523 713,481 758,461 786,495 640,475 663,540 707,568 713,634 742,651 885,656 897,685 310,626 340,645 304,670 391,672 365,678 360,684 308,707 332,731 396,715 385,731 399,724 226,699 205,745 488,746 512,735 478,773 435,767 568,788 586,777 447,826 486,857 553,587 689,735 697,756 660,734 797,727 823,720 809,789 830,786 830,793 773,830 798,824 806,831 668,848 726,868 745,861 789,868 731,921 842,900 631,880 488,901 503,919 581,929 453,956 408,996 347,1020 411,1075 486,1047 483,1074 624,1020 641,951 666,941 647,974 792,947 811,945 222,925 241,919 274,934 246,967 256,967 943,673 956,678 992,658 986,663 1088,594 1095,594 1138,642 1110,689 1152,702 1010,705 979,730 1025,722 941,770 1084,769 1130,764 1060,778 990,815 1030,816 1054,801 1090,828 994,856 984,872 1018,876 1049,875 1073,907 1334,294 1198,312 1273,341 1330,344 1355,324 1355,360 1192,375 1302,392 1390,436 1297,468 1307,486 1362,465 1466,461 1488,493 1423,484 1432,482 1440,494 1431,503 1450,496 1372,550",
g: "291,124 341,126 263,138 239,145 272,175 111,192 321,200 214,255 268,313 305,324 307,337 268,350 282,344 238,371 215,380 250,382 255,385 153,397 282,464 244,491 273,545 359,466 496,253 445,266 433,296 458,354 474,370 493,461 561,385 586,442 663,319 649,420 634,448 628,470 627,482 717,412 580,510 602,524 572,538 529,550 593,570 567,609 467,577 450,597 462,676 379,580 321,603 213,608 261,654 286,666 201,687 232,690 360,638 381,630 397,649 360,652 367,720 388,742 433,729 510,717 331,741 205,766 150,763 232,790 293,786 357,799 323,828 408,825 372,834 368,858 354,881 222,828 243,831 206,846 232,866 265,865 200,893 317,903 297,919 298,939 259,932 482,842 508,840 575,839 448,867 453,867 549,883 521,907 392,938 365,949 408,952 395,956 453,968 538,957 498,971 520,987 507,1008 459,1013 472,1033 529,1030 439,1040 448,1052 495,1046 407,1050 364,1057 379,1033 383,1036 337,987 341,995 344,1017 389,1092 382,1100 430,1104 449,1102 520,1075 534,1075 526,1085 558,1093 562,1141 568,1046 581,1057 574,1002 603,998 578,962 596,960 599,973 655,950 642,993 648,1007 674,1001 690,1013 652,878 767,1000 782,967 729,479 792,480 771,524 719,539 656,552 739,599 762,580 809,558 834,570 812,620 826,653 665,628 745,628 751,637 672,670 657,691 680,685 694,702 707,677 764,683 757,720 646,740 648,779 631,794 718,797 706,808 811,729 819,716 761,796 784,787 782,801 732,834 749,829 819,837 757,868 761,888 824,879 810,907 876,751 896,630 903,846 873,879 897,884 891,915 865,927 845,934 890,518 931,308 962,302 1008,310 938,322 872,377 882,385 977,397 984,422 957,448 933,452 992,462 1029,460 1038,199 1117,301 1105,397 1116,437 979,514 966,539 990,537 1019,567 1020,585 1002,629 1077,624 1040,659 992,687 948,732 1017,725 1067,714 1089,726 1142,717 1129,670 1167,682 980,764 1010,762 991,791 1014,803 987,819 1043,824 1056,793 1088,790 1112,784 1088,803 1132,805 1158,800 1159,779 1102,818 1069,828 1068,844 1080,858 1093,862 1113,848 1018,868 961,893 963,902 1006,924 948,952 1205,330 1256,353 1299,349 1290,358 1314,324 1318,321 1366,317 1362,344 1333,386 1252,413 1248,436 1291,438 1232,489 1210,507 1183,535 1387,503 1459,445 1413,479 1459,475 1458,485" }
];
// Points are spread over three layers in a stable order so that no colour always sits on top.
const svg = document.getElementById("dots");
const points = [];
for (const tile of TILES) {
  for (const key of ["y", "g", "r"]) {
    for (const pair of tile[key].split(" ")) {
      const [x, y] = pair.split(",").map(Number);
      points.push({ x: tile.at[0] + x / 3, y: tile.at[1] + y / 3, c: COLORS[key], k: (x * 7 + y * 13) % 3 });
    }
  }
}
for (let layer = 0; layer < 3; layer++) {
  for (const p of points.filter(q => q.k === layer)) {
    const dot = document.createElementNS("http://www.w3.org/2000/svg", "circle");
    dot.setAttribute("cx", p.x.toFixed(1));
    dot.setAttribute("cy", p.y.toFixed(1));
    dot.setAttribute("r", 5);
    dot.setAttribute("fill", p.c);
    svg.appendChild(dot);
  }
}
```
